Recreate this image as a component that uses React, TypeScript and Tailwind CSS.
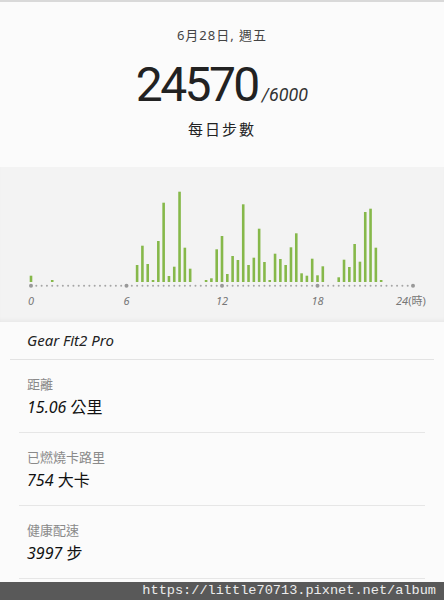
const bars: [number, number][] = [
  [0, 275.7], [4, 280], [20, 265], [21, 245.7], [22, 264], [23, 280], [24, 241],
  [25, 202.7], [26, 276], [27, 266.7], [28, 191.7], [29, 247.7], [30, 268.7],
  [33, 280], [34, 278.3], [35, 249.3], [36, 236], [37, 274], [38, 256], [39, 260],
  [40, 204.3], [41, 265], [42, 257.7], [43, 228.7], [44, 262], [45, 280], [46, 253.7],
  [47, 259], [48, 265], [49, 247.3], [50, 233.3], [51, 273.3], [52, 275.7], [53, 258.7],
  [54, 275.3], [55, 266.3], [58, 277.3], [59, 259.7], [60, 267], [61, 244], [62, 261.7],
  [63, 212], [64, 208.7], [65, 247.7], [66, 280],
];

const X0 = 31;
const STEP = 382 / 72;
const TOP = 167;
const BASE = 282 - TOP;
const DOTS_Y = 285.7 - TOP;

function StepChart() {
  return (
    <svg width="444" height="155" viewBox="0 0 444 155" className="block">
      {bars.map(([i, top]) => (
        <rect key={i} x={X0 + i * STEP - 1.3} y={top - TOP} width={2.6} height={BASE - (top - TOP)} fill="#86b84a" />
      ))}
      {Array.from({ length: 73 }, (_, i) => (
        <circle key={i} cx={X0 + i * STEP} cy={DOTS_Y} r={i % 18 === 0 ? 2 : 1} fill={i % 18 === 0 ? "#999" : "#a5a5a5"} />
      ))}
      {[["0", 0], ["6", 18], ["12", 36], ["18", 54]].map(([t, i]) => (
        <text key={t as string} x={X0 + (i as number) * STEP} y={305 - TOP} textAnchor="middle" fontSize="11" fontStyle="italic" fill="#777" fontFamily="'Noto Sans', sans-serif">{t}</text>
      ))}
      <text x={396} y={305 - TOP} fontSize="11" fill="#777" fontFamily="'Noto Sans', 'Noto Sans CJK TC', sans-serif"><tspan fontStyle="italic">24</tspan>(時)</text>
    </svg>
  );
}

function Stat({ label, value, unit }: { label: string; value: string; unit: string }) {
  return (
    <div className="mx-[19px] h-[73px] border-b border-[#e6e6e6] pl-[8px] pt-[15px]">
      <div className="text-[13px] leading-[18px] text-[#8a8a8a]">{label}</div>
      <div className="mt-[4px] text-[16px] leading-[20px] text-[#111]">
        <span className="italic">{value}</span> {unit}
      </div>
    </div>
  );
}

export default function App() {
  return (
    <div className="w-[444px] h-[600px] overflow-hidden bg-[#fbfbfb] flex flex-col" style={{ fontFamily: "'Noto Sans', 'Noto Sans CJK TC', sans-serif" }}>
      <div className="h-[167px] border-t-2 border-[#d9d9d9] flex flex-col items-center">
        <div className="mt-[24px] text-[13px] leading-[18px] text-[#444] tracking-[1px]">6月28日, 週五</div>
        <div className="mt-[15px] flex items-baseline text-[#222]">
          <span className="text-[48px] leading-[52px] tracking-[-2.6px]" style={{ fontFamily: "Roboto, sans-serif" }}>24570</span>
          <span className="ml-[4px] text-[18px] italic text-[#333]" style={{ fontFamily: "Roboto, sans-serif" }}>/6000</span>
        </div>
        <div className="mt-[8px] text-[15px] leading-[20px] text-[#222] tracking-[2px]">每日步數</div>
      </div>
      <div className="h-[155px] bg-[#f3f3f3] shadow-[inset_0_-4px_5px_-3px_rgba(0,0,0,0.06)]">
        <StepChart />
      </div>
      <div className="flex-1 flex flex-col">
        <div className="mx-[10px] h-[38px] border-b border-[#e3e3e3] pl-[17px] flex items-center text-[15px] italic text-[#222]">Gear Fit2 Pro</div>
        <Stat label="距離" value="15.06" unit="公里" />
        <Stat label="已燃燒卡路里" value="754" unit="大卡" />
        <Stat label="健康配速" value="3997" unit="步" />
        <div className="mt-auto h-[18px] bg-[#595959] flex items-center justify-end pr-[8px] text-[13.6px] text-[#ececec]" style={{ fontFamily: "'Liberation Mono', monospace" }}>
          https://little70713.pixnet.net/album
        </div>
      </div>
    </div>
  );
}
